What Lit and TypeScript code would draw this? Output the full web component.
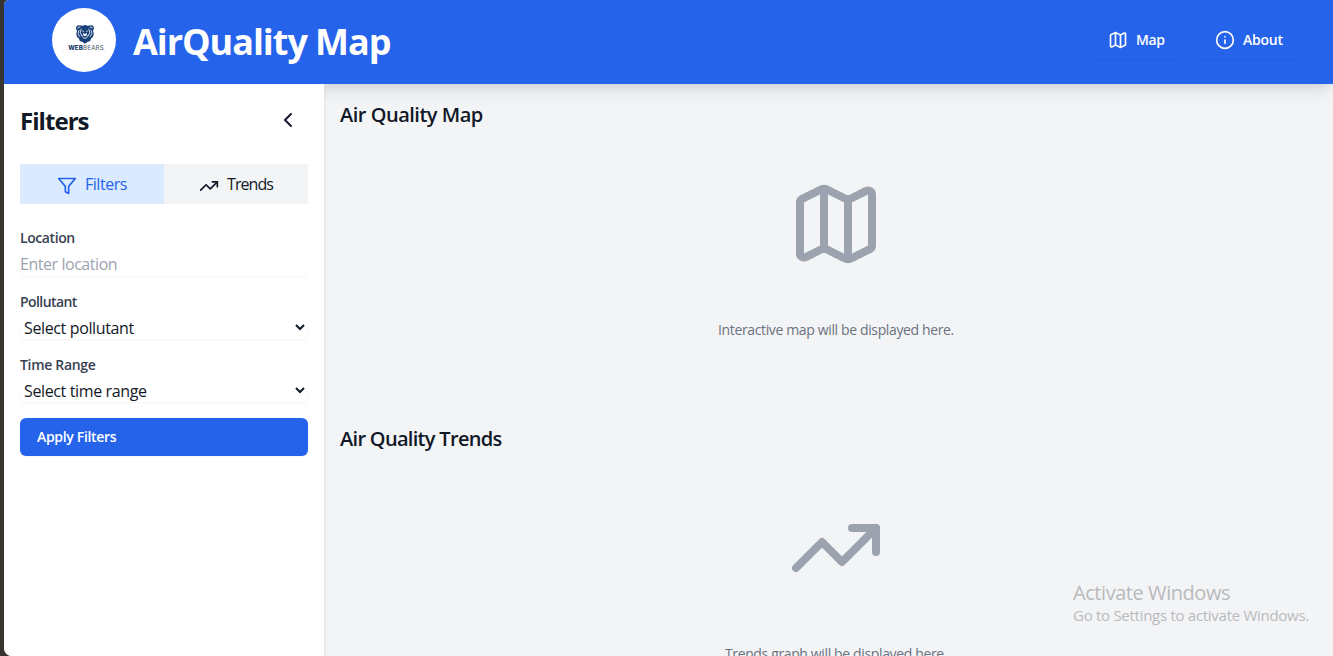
import { LitElement, html, css, svg } from "lit";
import { customElement, property } from "lit/decorators.js";

const shapes: Record<string, unknown> = {
  map: svg`<path d="M14.106 5.553a2 2 0 0 0 1.788 0l3.659-1.83A1 1 0 0 1 21 4.619v12.764a1 1 0 0 1-.553.894l-4.553 2.277a2 2 0 0 1-1.788 0l-4.212-2.106a2 2 0 0 0-1.788 0l-3.659 1.83A1 1 0 0 1 3 19.381V6.618a1 1 0 0 1 .553-.894l4.553-2.277a2 2 0 0 1 1.788 0z"/><path d="M15 5.764v15M9 3.236v15"/>`,
  info: svg`<circle cx="12" cy="12" r="10"/><path d="M12 16v-4M12 8h.01"/>`,
  filter: svg`<polygon points="22 3 2 3 10 12.46 10 19 14 21 14 12.46 22 3"/>`,
  trend: svg`<polyline points="22 7 13.5 15.5 8.5 10.5 2 17"/><polyline points="16 7 22 7 22 13"/>`,
  left: svg`<path d="m15 18-6-6 6-6"/>`,
};

@customElement("ui-icon")
class UiIcon extends LitElement {
  @property() name = "map";
  static styles = css`
    :host { display: block; width: 20px; height: 20px; flex: none; }
    .glyph { display: block; width: 100%; height: 100%; }
  `;
  render() {
    return html`<svg class="glyph" viewBox="0 0 24 24" fill="none" stroke="currentColor" stroke-width="2" stroke-linecap="round" stroke-linejoin="round">${shapes[this.name]}</svg>`;
  }
}

@customElement("brand-logo")
class BrandLogo extends LitElement {
  static styles = css`
    :host { display: flex; flex-direction: column; align-items: center; width: 64px; height: 64px; border-radius: 50%; background: #fff; padding-top: 16px; box-sizing: border-box; flex: none; }
    .bear { display: block; width: 20px; height: 20px; margin-left: 2px; }
    .name { font: 400 6.2px/7px Inter, sans-serif; color: #4b5563; white-space: nowrap; margin-left: 4px; letter-spacing: .16px; }
    .strong { font-weight: 800; color: #173a6b; }
  `;
  render() {
    return html`
      <svg class="bear" viewBox="0 0 20 20">
        <path fill="#173f78" d="M1.300 2.500 3 1.200l2.500.3L7.500 1.800 10 1l2.500.8 2-.3 2.500-.3 1.700 1.300.3 2.300-1 1.900.8 3.300-1 3.200-1.600 1-1 2.800L12.500 18 10 19.700 7.500 18l-2.700-1-1-2.800-1.600-1-1-3.200L2 6.700 1 4.800z"/>
        <path fill="none" stroke="#fff" stroke-width=".8" d="M2.800 4.500 3.500 3l1.800.3M17.200 4.500 16.500 3l-1.800.3M4 6l-.9 3.500 1.700 3.300M6.200 4.800l-.9 4 1.500 3M16 6l.9 3.500-1.700 3.300M13.800 4.800l.9 4-1.300 3M7.300 6.800l1.700.8M12.700 6.800l-1.700.8M7 11c0 4.300 6 4.300 6 0"/>
        <path fill="#fff" d="M8 9h4l-.7 3H8.700z"/>
        <path fill="#173f78" d="M8.900 9h2.200L10 10.500z"/>
      </svg>
      <div class="name"><span class="strong">WEB</span>BEARS</div>`;
  }
}

@customElement("app-root")
class AppRoot extends LitElement {
  static styles = css`
    :host { display: block; height: 656px; overflow: hidden; background: #383531; padding-left: 4px; box-sizing: border-box; position: relative; font-family: "Open Sans", "Noto Sans", sans-serif; color: #111827; font-size: 16px; line-height: 24px; }
    * { box-sizing: border-box; }
    .page { height: 656px; display: flex; flex-direction: column; background: #f3f4f6; border-radius: 5px 0 0 8px; overflow: hidden; }
    .header { height: 84px; flex: none; background: #2563eb; display: flex; align-items: center; padding: 0 33px 4px 48px; box-shadow: 0 10px 15px -3px rgba(0,0,0,.1), 0 4px 6px -2px rgba(0,0,0,.05); }
    .title { margin: 3px 0 0 17px; color: #fff; font-size: 36px; line-height: 40px; font-weight: 700; white-space: nowrap; letter-spacing: -1.05px; }
    .nav { margin-left: auto; display: flex; gap: 16px; }
    .link { height: 38px; display: flex; align-items: center; gap: 8px; padding: 0 17px; border-radius: 6px; color: #fff; font-size: 14px; line-height: 20px; font-weight: 600; box-shadow: 0 1px 2px rgba(0,0,0,.05); white-space: nowrap; }
    .link.map { width: 91px; letter-spacing: -.4px; }
    .link.about { width: 102px; letter-spacing: -.25px; }
    .body { flex: 1; min-height: 0; display: flex; }
    .side { width: 320px; flex: none; background: #fff; padding: 16px; box-shadow: 0 4px 6px -1px rgba(0,0,0,.1), 0 2px 4px -1px rgba(0,0,0,.06); position: relative; }
    .head { display: flex; justify-content: space-between; height: 40px; margin-bottom: 24px; }
    .heading { margin: 5px 0 0; font-size: 24px; line-height: 32px; font-weight: 700; white-space: nowrap; letter-spacing: -.95px; }
    .collapse { width: 40px; height: 40px; padding: 8px; }
    .collapse ui-icon { width: 24px; height: 24px; }
    .tabs { display: flex; height: 40px; margin-bottom: 24px; }
    .tab { flex: 1; display: flex; align-items: center; justify-content: center; gap: 8px; background: #f3f4f6; white-space: nowrap; letter-spacing: -.95px; }
    .tab ui-icon { margin-top: 3px; }
    .tab.on { background: #dbeafe; color: #2563eb; letter-spacing: -.45px; }
    .label { display: block; font-size: 14px; line-height: 20px; font-weight: 600; color: #374151; margin-bottom: 4px; white-space: nowrap; }
    .l1 { letter-spacing: -.42px; }
    .l2 { letter-spacing: -.58px; }
    .l3 { letter-spacing: -.32px; }
    .control { display: block; width: 100%; height: 24px; border: 0; padding: 0; margin: 0 0 16px; border-radius: 6px; background: #fff; font: inherit; color: #111827; letter-spacing: -.45px; box-shadow: 0 1px 2px rgba(0,0,0,.05); }
    .control::placeholder { color: #9ca3af; opacity: 1; }
    select.control { height: 23px; line-height: 23px; letter-spacing: -.37px; }
    .apply { display: flex; align-items: center; width: 100%; height: 38px; border: 0; border-radius: 6px; background: #2563eb; color: #fff; padding: 0 17px; font: 600 14px/20px "Open Sans", "Noto Sans", sans-serif; letter-spacing: -.32px; box-shadow: 0 1px 2px rgba(0,0,0,.05); }
    .main { flex: 1; min-width: 0; padding: 16px 1px 0 16px; overflow: hidden; }
    .section { height: 324px; display: flex; flex-direction: column; align-items: center; }
    .sub { margin: 1px 0 0; align-self: flex-start; font-size: 20px; line-height: 28px; font-weight: 600; white-space: nowrap; letter-spacing: -.49px; }
    .sub.t { letter-spacing: -.69px; }
    .big { width: 96px; height: 96px; margin: 47px 0 48px; color: #9ca3af; }
    .note { margin: 0; font-size: 14px; line-height: 20px; color: #6b7280; white-space: nowrap; letter-spacing: -.365px; }
    .watermark { position: absolute; left: 1073px; top: 580px; color: #b9babc; white-space: nowrap; }
    .w1 { font-size: 20px; line-height: 26px; letter-spacing: -.44px; }
    .w2 { font-size: 15px; line-height: 20px; margin-top: -1px; letter-spacing: -.28px; }
  `;
  render() {
    return html`
      <div class="page">
        <header class="header">
          <brand-logo></brand-logo>
          <h1 class="title"><span>AirQuality Map</span></h1>
          <nav class="nav">
            <a class="link map"><ui-icon name="map"></ui-icon><span>Map</span></a>
            <a class="link about"><ui-icon name="info"></ui-icon><span>About</span></a>
          </nav>
        </header>
        <div class="body">
          <aside class="side">
            <div class="head">
              <h2 class="heading">Filters</h2>
              <div class="collapse"><ui-icon name="left"></ui-icon></div>
            </div>
            <div class="tabs">
              <div class="tab on"><ui-icon name="filter"></ui-icon><span>Filters</span></div>
              <div class="tab"><ui-icon name="trend"></ui-icon><span>Trends</span></div>
            </div>
            <label class="label l1">Location</label>
            <input class="control" placeholder="Enter location" />
            <label class="label l2">Pollutant</label>
            <select class="control"><option>Select pollutant</option></select>
            <label class="label l3">Time Range</label>
            <select class="control"><option>Select time range</option></select>
            <button class="apply">Apply Filters</button>
          </aside>
          <main class="main">
            <section class="section">
              <h3 class="sub">Air Quality Map</h3>
              <ui-icon class="big" name="map"></ui-icon>
              <p class="note">Interactive map will be displayed here.</p>
            </section>
            <section class="section">
              <h3 class="sub t">Air Quality Trends</h3>
              <ui-icon class="big" name="trend"></ui-icon>
              <p class="note">Trends graph will be displayed here.</p>
            </section>
          </main>
        </div>
      </div>
      <div class="watermark"><div class="w1">Activate Windows</div><div class="w2">Go to Settings to activate Windows.</div></div>
    `;
  }
}
